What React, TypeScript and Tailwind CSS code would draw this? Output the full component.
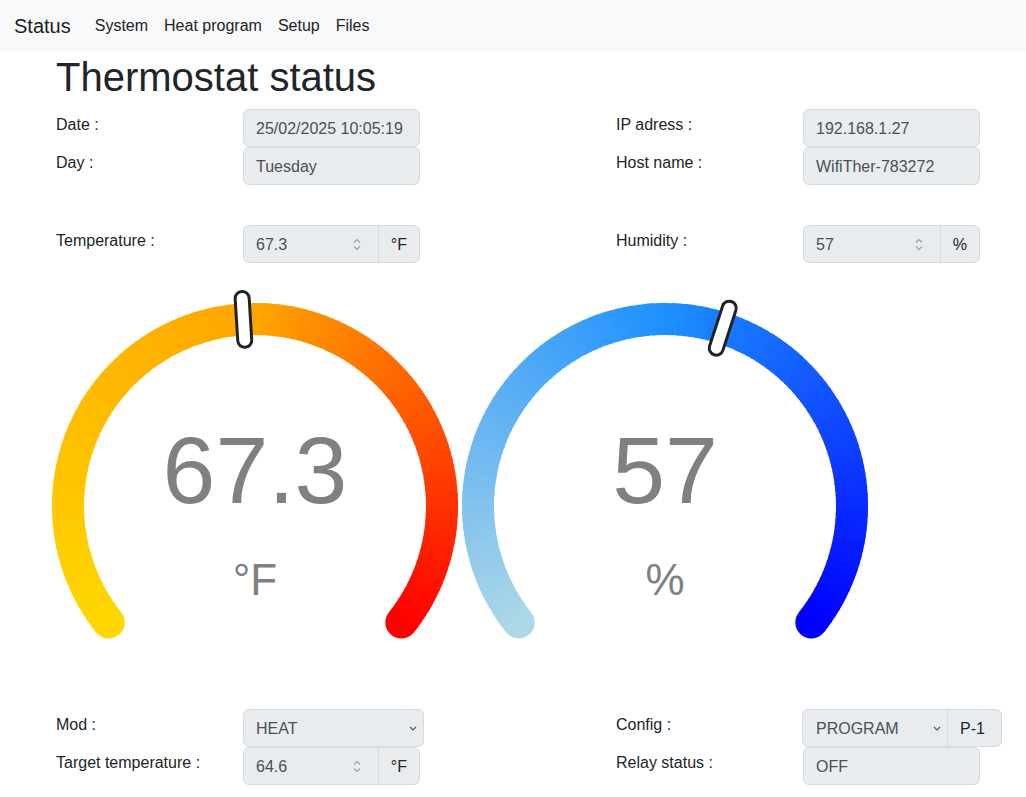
import React from 'react';

type Rgb = [number, number, number];

const hex = (h: string): Rgb => [
  parseInt(h.slice(1, 3), 16),
  parseInt(h.slice(3, 5), 16),
  parseInt(h.slice(5, 7), 16),
];

const mix = (stops: string[], t: number) => {
  const seg = (stops.length - 1) * t;
  const i = Math.min(Math.floor(seg), stops.length - 2);
  const f = seg - i;
  const a = hex(stops[i]);
  const b = hex(stops[i + 1]);
  const c = a.map((v, k) => Math.round(v + (b[k] - v) * f));
  return `rgb(${c[0]},${c[1]},${c[2]})`;
};

interface GaugeProps {
  value: number;
  min: number;
  max: number;
  label: string;
  unit: string;
  stops: string[];
}

const Gauge: React.FC<GaugeProps> = ({ value, min, max, label, unit, stops }) => {
  const cx = 205;
  const cy = 225;
  const r = 187;
  const sweep = 257;
  const start = -sweep / 2;
  const n = 128;
  const step = sweep / n;

  const pt = (deg: number) => {
    const a = (deg * Math.PI) / 180;
    return [cx + r * Math.sin(a), cy - r * Math.cos(a)];
  };

  // arc drawn as many short pieces so the colour follows the angle
  const pieces = [];
  for (let i = 0; i < n; i++) {
    const a0 = start + i * step;
    const a1 = Math.min(a0 + step + 0.6, start + sweep);
    const [x0, y0] = pt(a0);
    const [x1, y1] = pt(a1);
    pieces.push(
      <path
        key={i}
        d={`M ${x0} ${y0} A ${r} ${r} 0 0 1 ${x1} ${y1}`}
        stroke={mix(stops, (i + 0.5) / n)}
        strokeWidth={32}
        fill="none"
      />
    );
  }

  const [sx, sy] = pt(start);
  const [ex, ey] = pt(start + sweep);
  const ang = start + (sweep * (value - min)) / (max - min);
  const [mx, my] = pt(ang);

  return (
    <svg width={410} height={410} viewBox="0 0 410 410" className="shrink-0">
      <circle cx={sx} cy={sy} r={16} fill={stops[0]} />
      <circle cx={ex} cy={ey} r={16} fill={stops[stops.length - 1]} />
      {pieces}
      <g transform={`translate(${mx} ${my}) rotate(${ang})`}>
        <rect x={-7} y={-28} width={14} height={56} rx={7} fill="#fff" stroke="#222" strokeWidth={3} />
      </g>
      <text x={cx} y={222} textAnchor="middle" fontSize={95} fill="#808080" fontFamily="Liberation Sans, Arial, sans-serif">
        {label}
      </text>
      <text x={cx} y={314} textAnchor="middle" fontSize={44} fill="#808080" fontFamily="Liberation Sans, Arial, sans-serif">
        {unit}
      </text>
    </svg>
  );
};

const Spinner = () => (
  <svg width="8" height="13" viewBox="0 0 8 13" className="shrink-0">
    <path d="M1 4.5 L4 1.5 L7 4.5 M1 8.5 L4 11.5 L7 8.5" stroke="#9a9fa4" strokeWidth="1.1" fill="none" />
  </svg>
);

const Chevron = () => (
  <svg width="8" height="5" viewBox="0 0 8 5" className="shrink-0">
    <path d="M1 1 L4 4 L7 1" stroke="#555" strokeWidth="1.2" fill="none" />
  </svg>
);

const Label: React.FC<{ text: string }> = ({ text }) => (
  <div className="w-[187px] shrink-0 pt-[4px] leading-6 text-[#212529]">{text}</div>
);

const Box: React.FC<{ text: string }> = ({ text }) => (
  <div className="w-[177px] h-[38px] flex items-center px-3 pt-px bg-[#e9ecef] border border-[#d5dade] rounded-[6px] text-[#495057]">
    {text}
  </div>
);

const NumberBox: React.FC<{ value: string; unit: string }> = ({ value, unit }) => (
  <div className="w-[177px] h-[38px] flex bg-[#e9ecef] border border-[#d5dade] rounded-[6px]">
    <div className="flex-1 flex items-center pl-3 pr-[17px] pt-px text-[#495057]">
      <span className="flex-1">{value}</span>
      <Spinner />
    </div>
    <div className="flex items-center px-3 pt-px border-l border-[#d5dade] text-[#212529]">{unit}</div>
  </div>
);

const Row: React.FC<{ label: string; children: React.ReactNode }> = ({ label, children }) => (
  <div className="flex items-start h-[38px]">
    <Label text={label} />
    {children}
  </div>
);

export default function App() {
  return (
    <div className="min-h-screen bg-white font-['Liberation_Sans',Arial,sans-serif] text-base text-[#212529] overflow-hidden">
      <nav className="h-[52px] bg-[#f8f9fa] flex items-center pl-[14px]">
        <span className="text-[20px] mr-[16px] text-[#1c1f23]">Status</span>
        {['System', 'Heat program', 'Setup', 'Files'].map((l) => (
          <span key={l} className="px-2 text-[#1f2327]">
            {l}
          </span>
        ))}
      </nav>

      <div className="pl-[56px]">
        <h1 className="mt-[1px] mb-2 text-[40px] leading-[48px] text-[#212529]">Thermostat status</h1>

        <div className="flex">
          <div className="w-[560px] shrink-0">
            <Row label="Date :">
              <Box text="25/02/2025 10:05:19" />
            </Row>
            <Row label="Day :">
              <Box text="Tuesday" />
            </Row>
            <div className="h-10" />
            <Row label="Temperature :">
              <NumberBox value="67.3" unit="°F" />
            </Row>
          </div>
          <div className="flex-1 min-w-0">
            <Row label="IP adress :">
              <Box text="192.168.1.27" />
            </Row>
            <Row label="Host name :">
              <Box text="WifiTher-783272" />
            </Row>
            <div className="h-10" />
            <Row label="Humidity :">
              <NumberBox value="57" unit="%" />
            </Row>
          </div>
        </div>

        <div className="flex -ml-[6px] mt-[18px] mb-[18px]">
          <Gauge value={67.3} min={32} max={104.6} label="67.3" unit="°F" stops={['#ffd700', '#ffa500', '#ff0000']} />
          <Gauge value={57} min={0} max={100} label="57" unit="%" stops={['#add8e6', '#1e90ff', '#0000ff']} />
        </div>

        <div className="flex">
          <div className="w-[560px] shrink-0">
            <Row label="Mod :">
              <div className="w-[181px] h-[38px] flex items-center pl-3 pr-[6px] pt-px bg-[#e9ecef] border border-[#d5dade] rounded-[6px] text-[#495057]">
                <span className="flex-1">HEAT</span>
                <Chevron />
              </div>
            </Row>
            <Row label="Target temperature :">
              <NumberBox value="64.6" unit="°F" />
            </Row>
          </div>
          <div className="flex-1 min-w-0">
            <Row label="Config :">
              <div className="w-[200px] h-[38px] flex -ml-px bg-[#e9ecef] border border-[#d5dade] rounded-[6px]">
                <div className="w-[144px] flex items-center pl-[13px] pr-[6px] pt-px text-[#495057]">
                  <span className="flex-1">PROGRAM</span>
                  <Chevron />
                </div>
                <div className="flex-1 flex items-center px-3 pt-px border-l border-[#d5dade] text-[#212529]">P-1</div>
              </div>
            </Row>
            <Row label="Relay status :">
              <Box text="OFF" />
            </Row>
          </div>
        </div>
      </div>
    </div>
  );
}
